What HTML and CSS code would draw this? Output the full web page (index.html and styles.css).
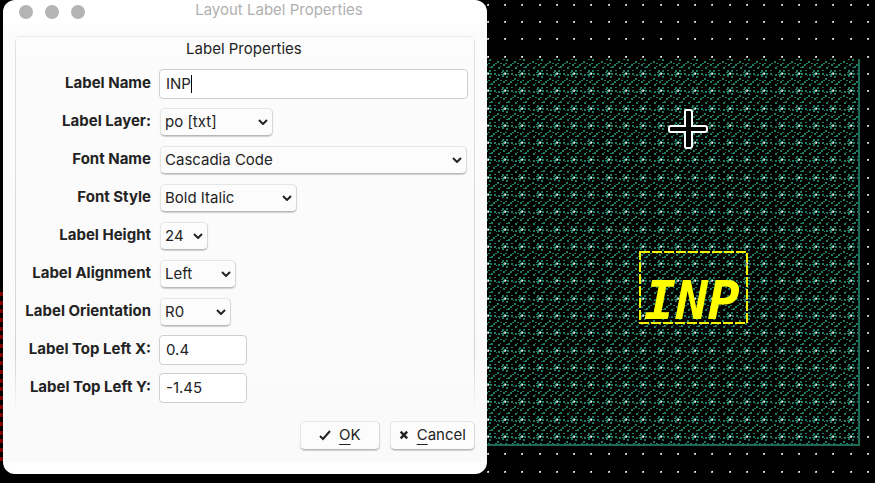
FILE: index.html
```html
<!DOCTYPE html>
<html lang="en">
<head>
<meta charset="utf-8">
<meta name="viewport" content="width=device-width, initial-scale=1">
<title>Layout Label Properties</title>
<link rel="stylesheet" href="styles.css">
</head>
<body>
<svg class="canvas" aria-label="Layout canvas">
  <defs>
    <g id="cell">
      <path class="hatch-ink" d="M5 4h2v2h-2zM9 4h2v2h-2zM4 6h2v1h-2zM10 7h2v2h-2zM4 8h2v1h-2zM5 9h2v2h-2zM9 10h2v2h-2zM1 8h2v2h-2zM14 7h2v2h-2zM16 9h1v1h-1zM3 14h2v1h-2zM0 12h2v2h-2zM14 4h2v1h-2zM15 14h2v1h-2zM13 15h2v2h-2zM11 0h2v2h-2zM9 1h2v1h-2zM1 1h2v2h-2zM3 0h1v1h-1zM8 14h2v1h-2zM6 15h2v2h-2z"/>
      <path class="hatch-core" d="M7 6h2v1h-2zM6 7h1v2h-1zM7 8h2v1h-2zM9 7h1v1h-1z"/>
    </g>
    <g id="cell-row">
      <use href="#cell"/><use href="#cell" x="17"/><use href="#cell" x="35"/><use href="#cell" x="52"/><use href="#cell" x="69"/><use href="#cell" x="86"/><use href="#cell" x="104"/>
    </g>
    <pattern id="hatch" x="497" y="66" width="121" height="121" patternUnits="userSpaceOnUse">
      <use href="#cell-row"/><use href="#cell-row" y="17"/><use href="#cell-row" y="35"/><use href="#cell-row" y="52"/><use href="#cell-row" y="69"/><use href="#cell-row" y="86"/><use href="#cell-row" y="104"/>
    </pattern>
    <g id="point">
      <path class="dot-soft" d="M0 0h2v2h-2z"/>
      <path class="dot" d="M1 0h1v1h-1z"/>
    </g>
    <g id="point-row">
      <use href="#point"/><use href="#point" x="17"/><use href="#point" x="35"/><use href="#point" x="52"/><use href="#point" x="69"/><use href="#point" x="86"/><use href="#point" x="104"/>
    </g>
    <pattern id="grid" x="504" y="73" width="121" height="121" patternUnits="userSpaceOnUse">
      <use href="#point-row"/><use href="#point-row" y="17"/><use href="#point-row" y="35"/><use href="#point-row" y="52"/><use href="#point-row" y="69"/><use href="#point-row" y="86"/><use href="#point-row" y="104"/>
    </pattern>
    <pattern id="stripe" x="0" y="292" width="3" height="26" patternUnits="userSpaceOnUse">
      <path class="stripe-ink" d="M0 0h3v4h-3zM0 9h3v4h-3zM0 17h3v4h-3z"/>
    </pattern>
  </defs>
  <rect fill="url(#stripe)" y="292" width="3" height="172"/>
  <rect fill="url(#hatch)" x="440" y="59" width="419" height="386"/>
  <rect fill="url(#grid)" x="487" width="100%" height="100%"/>
  <path class="shape-edge" d="M440 445H859V59"/>
  <rect class="label-box" x="640" y="252" width="107" height="71"/>
  <text class="label-text" x="644" y="319">INP</text>
  <path class="cursor" d="M686 110h4q2 0 2 2v14h13q2 0 2 2v2q0 2-2 2h-13v14q0 2-2 2h-4q-1 0-1-2v-14h-14q-2 0-2-2v-2q0-2 2-2h14v-14q0-2 1-2z"/>
</svg>

<form class="dialog">
  <header class="titlebar">
    <span class="lights"><i></i><i></i><i></i></span>
    <h1>Layout Label Properties</h1>
  </header>
  <div class="content">
    <section class="group">
      <h2>Label Properties</h2>
      <div class="fields">
        <label for="name">Label Name</label>
        <span class="field"><input id="name" value="INP"><i class="caret"></i></span>

        <label for="layer">Label Layer:</label>
        <span class="field combo medium"><select id="layer"><option>po [txt]</option></select><svg class="icon" viewBox="0 0 10 6"><path d="M1 1l4 4 4-4"/></svg></span>

        <label for="font">Font Name</label>
        <span class="field combo"><select id="font"><option>Cascadia Code</option></select><svg class="icon" viewBox="0 0 10 6"><path d="M1 1l4 4 4-4"/></svg></span>

        <label for="style">Font Style</label>
        <span class="field combo large"><select id="style"><option>Bold Italic</option></select><svg class="icon" viewBox="0 0 10 6"><path d="M1 1l4 4 4-4"/></svg></span>

        <label for="height">Label Height</label>
        <span class="field combo tiny"><select id="height"><option>24</option></select><svg class="icon" viewBox="0 0 10 6"><path d="M1 1l4 4 4-4"/></svg></span>

        <label for="align">Label Alignment</label>
        <span class="field combo small"><select id="align"><option>Left</option></select><svg class="icon" viewBox="0 0 10 6"><path d="M1 1l4 4 4-4"/></svg></span>

        <label for="orient">Label Orientation</label>
        <span class="field combo short"><select id="orient"><option>R0</option></select><svg class="icon" viewBox="0 0 10 6"><path d="M1 1l4 4 4-4"/></svg></span>

        <label for="left-x">Label Top Left X:</label>
        <span class="field number"><input id="left-x" value="0.4"></span>

        <label for="left-y">Label Top Left Y:</label>
        <span class="field number"><input id="left-y" value="-1.45"></span>
      </div>
    </section>
    <footer class="actions">
      <button class="ok" type="button"><svg class="icon" viewBox="0 0 12 12"><path d="M1 7l3 3 7-8"/></svg><span><u>O</u>K</span></button>
      <button class="cancel" type="button"><svg class="icon cross" viewBox="0 0 12 12"><path d="M2 2l8 8M10 2l-8 8"/></svg><span><u>C</u>ancel</span></button>
    </footer>
  </div>
</form>
</body>
</html>
```
FILE: styles.css
```css
* { box-sizing: border-box; }

body {
  margin: 0;
  min-height: 100vh;
  background: #000;
  overflow: hidden;
  font: 15px/20px Inter, "Liberation Sans", sans-serif;
  color: #232323;
}

.canvas {
  position: absolute;
  inset: 0;
  width: 100%;
  height: 100%;
  shape-rendering: crispEdges;
}
.hatch-ink { fill: #1f7a62; }
.hatch-core { fill: #3a8f78; }
.dot-soft { fill: #aaa; }
.dot { fill: #fff; }
.stripe-ink { fill: #800000; }
.shape-edge { fill: none; stroke: #1b6b56; stroke-width: 2; }
.label-box { fill: none; stroke: #f2f200; stroke-width: 2; stroke-dasharray: 10 2; }
.label-text { fill: #ff0; font: italic bold 53px "DejaVu Sans Mono", monospace; }
.cursor { fill: #000; stroke: #fff; stroke-width: 2; shape-rendering: auto; }

.dialog {
  position: relative;
  width: 55.3vw;
  min-width: 400px;
  margin-left: 3px;
  padding-bottom: 12px;
  background: #fff;
  border-radius: 12px;
  overflow: hidden;
}

.titlebar { display: flex; align-items: center; height: 24px; padding: 0 0 4px 16px; }
.lights { display: flex; gap: 12px; padding-top: 4px; }
.lights i { width: 14px; height: 14px; border-radius: 50%; background: #b4b4b4; }
h1, h2 { margin: 0; font-size: 15px; font-weight: 400; text-align: center; }
h1 { flex: 1; padding-right: 14px; color: #b0b0b0; }

.content { padding: 12px; background: linear-gradient(#fcfcfc, #fafafa); }
.group {
  padding: 2px 7px 7px 5px;
  border-top: 1px solid #ececec;
  border-radius: 5px;
  background:
    linear-gradient(#e2e2e2, #d4d4d4 85%, #d4d4d400) left 3px / 1px 100% no-repeat,
    linear-gradient(#e2e2e2, #d4d4d4 85%, #d4d4d400) right 3px / 1px 100% no-repeat;
}
.fields {
  display: grid;
  grid-template-columns: 131px 1fr;
  grid-auto-rows: 30px;
  gap: 8px;
  padding-top: 10px;
}
label { padding-top: 4px; font-weight: 700; text-align: right; white-space: nowrap; }

.field { position: relative; display: block; height: 30px; }
input, select, button { font: inherit; color: inherit; outline: 0; }
input {
  width: 100%;
  height: 30px;
  padding: 0 6px 1px;
  background: #fff;
  border: 1px solid #cfcfcf;
  border-radius: 4px;
}
.caret { position: absolute; left: 32px; top: 6px; width: 1px; height: 18px; background: #000; }
select {
  appearance: none;
  width: 100%;
  height: 28px;
  padding: 0 4px;
}
select, button {
  background: #fcfcfc;
  border: 1px solid #e6e6e6;
  border-right-color: #d8d8d8;
  border-bottom-color: #b8b8b8;
  border-radius: 5px;
  box-shadow: 0 1px 1px #d0d0d0;
}
.combo { padding: 1px; }
.combo .icon { position: absolute; right: 6px; top: 12px; width: 10px; height: 6px; }
.icon path { fill: none; stroke: #232323; stroke-width: 2; }
.icon.cross path { stroke-width: 3; }
.medium { width: 115px; }
.large { width: 139px; }
.tiny { width: 50px; }
.small { width: 78px; }
.short { width: 73px; }
.number { width: 88px; }

.actions { display: flex; justify-content: flex-end; gap: 10px; padding-top: 11px; }
button { display: flex; align-items: center; justify-content: center; gap: 8px; height: 29px; padding: 0 8px 2px; }
.actions .icon { width: 12px; height: 12px; }
.ok { width: 80px; }
.cancel { width: 85px; }
u { text-decoration-thickness: 1px; text-underline-offset: 4px; }
```
